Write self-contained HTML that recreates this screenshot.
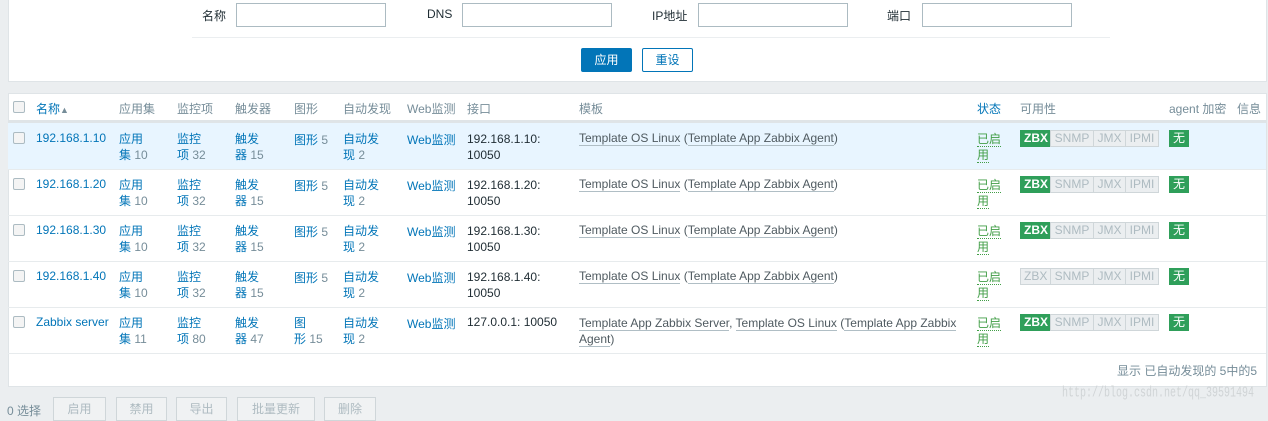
<!DOCTYPE html>
<html><head><meta charset="utf-8"><style>
*{margin:0;padding:0;box-sizing:border-box}
body{width:1268px;height:415px;background:#ebeef0;font-family:"Liberation Sans","Noto Sans CJK SC",sans-serif;font-size:12px;color:#1f2c33;position:relative;overflow:hidden}
.a{position:absolute;white-space:nowrap}
.p{position:absolute;background:#fff;border:1px solid #dfe4e7}
input{position:absolute;height:24px;border:1px solid #acbbc2;background:#fff}
.l{color:#0275b8}
.g{color:#768d99}
.cb{position:absolute;width:12px;height:12px;border:1px solid #acbbc2;border-radius:2px;background:#f4f4f4}
.t{color:#4f5a60;border-bottom:1px solid #b0bec5}
.st{color:#429e47;border-bottom:1px dotted #429e47;line-height:15px}
.av{position:absolute;display:flex;height:17px;font-size:12px}
.av span{border:1px solid #cfd6d9;background:#ebeef0;color:#aebbc1;padding:0 3px;line-height:15px;margin-left:-1px;text-align:center}
.av span.z{background:#2f9f5a;color:#fff;border-color:#2f9f5a;font-weight:bold;margin-left:0}
.av span:nth-child(1){width:31px}.av span:nth-child(2){width:44px}.av span:nth-child(3){width:33px}.av span:nth-child(4){width:34px}
.w{position:absolute;background:#2f9f5a;color:#fff;width:20px;height:17px;text-align:center;line-height:17px;font-size:12px}
.row{position:absolute;left:8px;width:1258px;height:46px;border-top:1px solid #e7ebed}
.ln{line-height:16px}
.btn{position:absolute;top:397px;height:24px;border:1px solid #cfd6d9;background:#f0f2f3;color:#aebbc1;text-align:center;line-height:22px}
</style></head><body>
<div class="p" style="left:8px;top:-1px;width:1259px;height:83px"></div>
<div class="a" style="left:202px;top:7px">名称</div><input style="left:236px;top:3px;width:150px">
<div class="a" style="left:427px;top:7px">DNS</div><input style="left:462px;top:3px;width:150px">
<div class="a" style="left:652px;top:7px">IP地址</div><input style="left:698px;top:3px;width:150px">
<div class="a" style="left:887px;top:7px">端口</div><input style="left:922px;top:3px;width:150px">
<div class="a" style="left:192px;top:37px;width:918px;border-top:1px solid #ebeef0"></div>
<div class="a" style="left:581px;top:48px;width:51px;height:24px;background:#0275b8;color:#fff;text-align:center;line-height:24px;border-radius:2px">应用</div>
<div class="a" style="left:642px;top:48px;width:51px;height:24px;border:1px solid #0275b8;color:#0275b8;text-align:center;line-height:22px;border-radius:2px">重设</div>

<div class="p" style="left:8px;top:93px;width:1259px;height:294px"></div>
<div class="a" style="left:8px;top:120px;width:1258px;height:3px;background:#dfe4e7"></div>
<div class="cb" style="left:13px;top:101px"></div>
<div class="a g" style="top:100px;left:36px"><span class="l">名称</span><span style="font-size:9px;color:#768d99">▲</span></div>
<div class="a g" style="top:100px;left:119px">应用集</div>
<div class="a g" style="top:100px;left:177px">监控项</div>
<div class="a g" style="top:100px;left:235px">触发器</div>
<div class="a g" style="top:100px;left:294px">图形</div>
<div class="a g" style="top:100px;left:343px">自动发现</div>
<div class="a g" style="top:100px;left:407px">Web监测</div>
<div class="a g" style="top:100px;left:467px">接口</div>
<div class="a g" style="top:100px;left:579px">模板</div>
<div class="a l" style="top:100px;left:977px">状态</div>
<div class="a g" style="top:100px;left:1020px">可用性</div>
<div class="a g" style="top:100px;left:1169px">agent 加密</div>
<div class="a g" style="top:100px;left:1237px">信息</div>

<div class="row" style="top:123px;background:#e8f5ff;border-top:none"></div>
<div class="row" style="top:169px"></div>
<div class="row" style="top:215px"></div>
<div class="row" style="top:261px"></div>
<div class="row" style="top:307px"></div>
<div class="row" style="top:353px"></div>

<div class="cb" style="left:13px;top:132px"></div><div class="a l" style="left:36px;top:131px">192.168.1.10</div>
<div class="a l ln" style="left:119px;top:131px">应用<br>集 <span class="g">10</span></div>
<div class="a l ln" style="left:177px;top:131px">监控<br>项 <span class="g">32</span></div>
<div class="a l ln" style="left:235px;top:131px">触发<br>器 <span class="g">15</span></div>
<div class="a l" style="left:294px;top:131px">图形 <span class="g">5</span></div>
<div class="a l ln" style="left:343px;top:131px">自动发<br>现 <span class="g">2</span></div>
<div class="a l" style="left:407px;top:131px">Web监测</div>
<div class="a ln" style="left:467px;top:131px">192.168.1.10:<br>10050</div>
<div class="a" style="left:579px;top:131px;color:#4f5a60"><span class="t">Template OS Linux</span> (<span class="t">Template App Zabbix Agent</span>)</div>
<div class="a" style="left:977px;top:131px;line-height:16px"><span class="st">已启</span><br><span class="st">用</span></div>
<div class="av" style="left:1020px;top:130px"><span class="z">ZBX</span><span>SNMP</span><span>JMX</span><span>IPMI</span></div>
<div class="w" style="left:1169px;top:130px">无</div>

<div class="cb" style="left:13px;top:178px"></div><div class="a l" style="left:36px;top:177px">192.168.1.20</div>
<div class="a l ln" style="left:119px;top:177px">应用<br>集 <span class="g">10</span></div>
<div class="a l ln" style="left:177px;top:177px">监控<br>项 <span class="g">32</span></div>
<div class="a l ln" style="left:235px;top:177px">触发<br>器 <span class="g">15</span></div>
<div class="a l" style="left:294px;top:177px">图形 <span class="g">5</span></div>
<div class="a l ln" style="left:343px;top:177px">自动发<br>现 <span class="g">2</span></div>
<div class="a l" style="left:407px;top:177px">Web监测</div>
<div class="a ln" style="left:467px;top:177px">192.168.1.20:<br>10050</div>
<div class="a" style="left:579px;top:177px;color:#4f5a60"><span class="t">Template OS Linux</span> (<span class="t">Template App Zabbix Agent</span>)</div>
<div class="a" style="left:977px;top:177px;line-height:16px"><span class="st">已启</span><br><span class="st">用</span></div>
<div class="av" style="left:1020px;top:176px"><span class="z">ZBX</span><span>SNMP</span><span>JMX</span><span>IPMI</span></div>
<div class="w" style="left:1169px;top:176px">无</div>

<div class="cb" style="left:13px;top:224px"></div><div class="a l" style="left:36px;top:223px">192.168.1.30</div>
<div class="a l ln" style="left:119px;top:223px">应用<br>集 <span class="g">10</span></div>
<div class="a l ln" style="left:177px;top:223px">监控<br>项 <span class="g">32</span></div>
<div class="a l ln" style="left:235px;top:223px">触发<br>器 <span class="g">15</span></div>
<div class="a l" style="left:294px;top:223px">图形 <span class="g">5</span></div>
<div class="a l ln" style="left:343px;top:223px">自动发<br>现 <span class="g">2</span></div>
<div class="a l" style="left:407px;top:223px">Web监测</div>
<div class="a ln" style="left:467px;top:223px">192.168.1.30:<br>10050</div>
<div class="a" style="left:579px;top:223px;color:#4f5a60"><span class="t">Template OS Linux</span> (<span class="t">Template App Zabbix Agent</span>)</div>
<div class="a" style="left:977px;top:223px;line-height:16px"><span class="st">已启</span><br><span class="st">用</span></div>
<div class="av" style="left:1020px;top:222px"><span class="z">ZBX</span><span>SNMP</span><span>JMX</span><span>IPMI</span></div>
<div class="w" style="left:1169px;top:222px">无</div>

<div class="cb" style="left:13px;top:270px"></div><div class="a l" style="left:36px;top:269px">192.168.1.40</div>
<div class="a l ln" style="left:119px;top:269px">应用<br>集 <span class="g">10</span></div>
<div class="a l ln" style="left:177px;top:269px">监控<br>项 <span class="g">32</span></div>
<div class="a l ln" style="left:235px;top:269px">触发<br>器 <span class="g">15</span></div>
<div class="a l" style="left:294px;top:269px">图形 <span class="g">5</span></div>
<div class="a l ln" style="left:343px;top:269px">自动发<br>现 <span class="g">2</span></div>
<div class="a l" style="left:407px;top:269px">Web监测</div>
<div class="a ln" style="left:467px;top:269px">192.168.1.40:<br>10050</div>
<div class="a" style="left:579px;top:269px;color:#4f5a60"><span class="t">Template OS Linux</span> (<span class="t">Template App Zabbix Agent</span>)</div>
<div class="a" style="left:977px;top:269px;line-height:16px"><span class="st">已启</span><br><span class="st">用</span></div>
<div class="av" style="left:1020px;top:268px"><span style="margin-left:0">ZBX</span><span>SNMP</span><span>JMX</span><span>IPMI</span></div>
<div class="w" style="left:1169px;top:268px">无</div>

<div class="cb" style="left:13px;top:316px"></div><div class="a l" style="left:36px;top:315px">Zabbix server</div>
<div class="a l ln" style="left:119px;top:315px">应用<br>集 <span class="g">11</span></div>
<div class="a l ln" style="left:177px;top:315px">监控<br>项 <span class="g">80</span></div>
<div class="a l ln" style="left:235px;top:315px">触发<br>器 <span class="g">47</span></div>
<div class="a l ln" style="left:294px;top:315px">图<br>形 <span class="g">15</span></div>
<div class="a l ln" style="left:343px;top:315px">自动发<br>现 <span class="g">2</span></div>
<div class="a l" style="left:407px;top:315px">Web监测</div>
<div class="a" style="left:467px;top:315px">127.0.0.1: 10050</div>
<div class="a ln" style="left:579px;top:315px;color:#4f5a60"><span class="t">Template App Zabbix Server</span>, <span class="t">Template OS Linux</span> (<span class="t">Template App Zabbix</span><br><span class="t">Agent</span>)</div>
<div class="a" style="left:977px;top:315px;line-height:16px"><span class="st">已启</span><br><span class="st">用</span></div>
<div class="av" style="left:1020px;top:314px"><span class="z">ZBX</span><span>SNMP</span><span>JMX</span><span>IPMI</span></div>
<div class="w" style="left:1169px;top:314px">无</div>

<div class="a g" style="left:1117px;top:362px">显示 已自动发现的 5中的5</div>
<div class="a" style="left:1062px;top:386px;font-family:'Liberation Mono',monospace;font-size:10px;transform:scaleY(1.5);transform-origin:0 0;color:#d0d4d6">http://blog.csdn.net/qq_39591494</div>

<div class="a g" style="left:7px;top:402px">0 选择</div>
<div class="btn" style="left:53px;width:53px">启用</div>
<div class="btn" style="left:116px;width:51px">禁用</div>
<div class="btn" style="left:176px;width:51px">导出</div>
<div class="btn" style="left:237px;width:78px">批量更新</div>
<div class="btn" style="left:324px;width:52px">删除</div>
</body></html>
